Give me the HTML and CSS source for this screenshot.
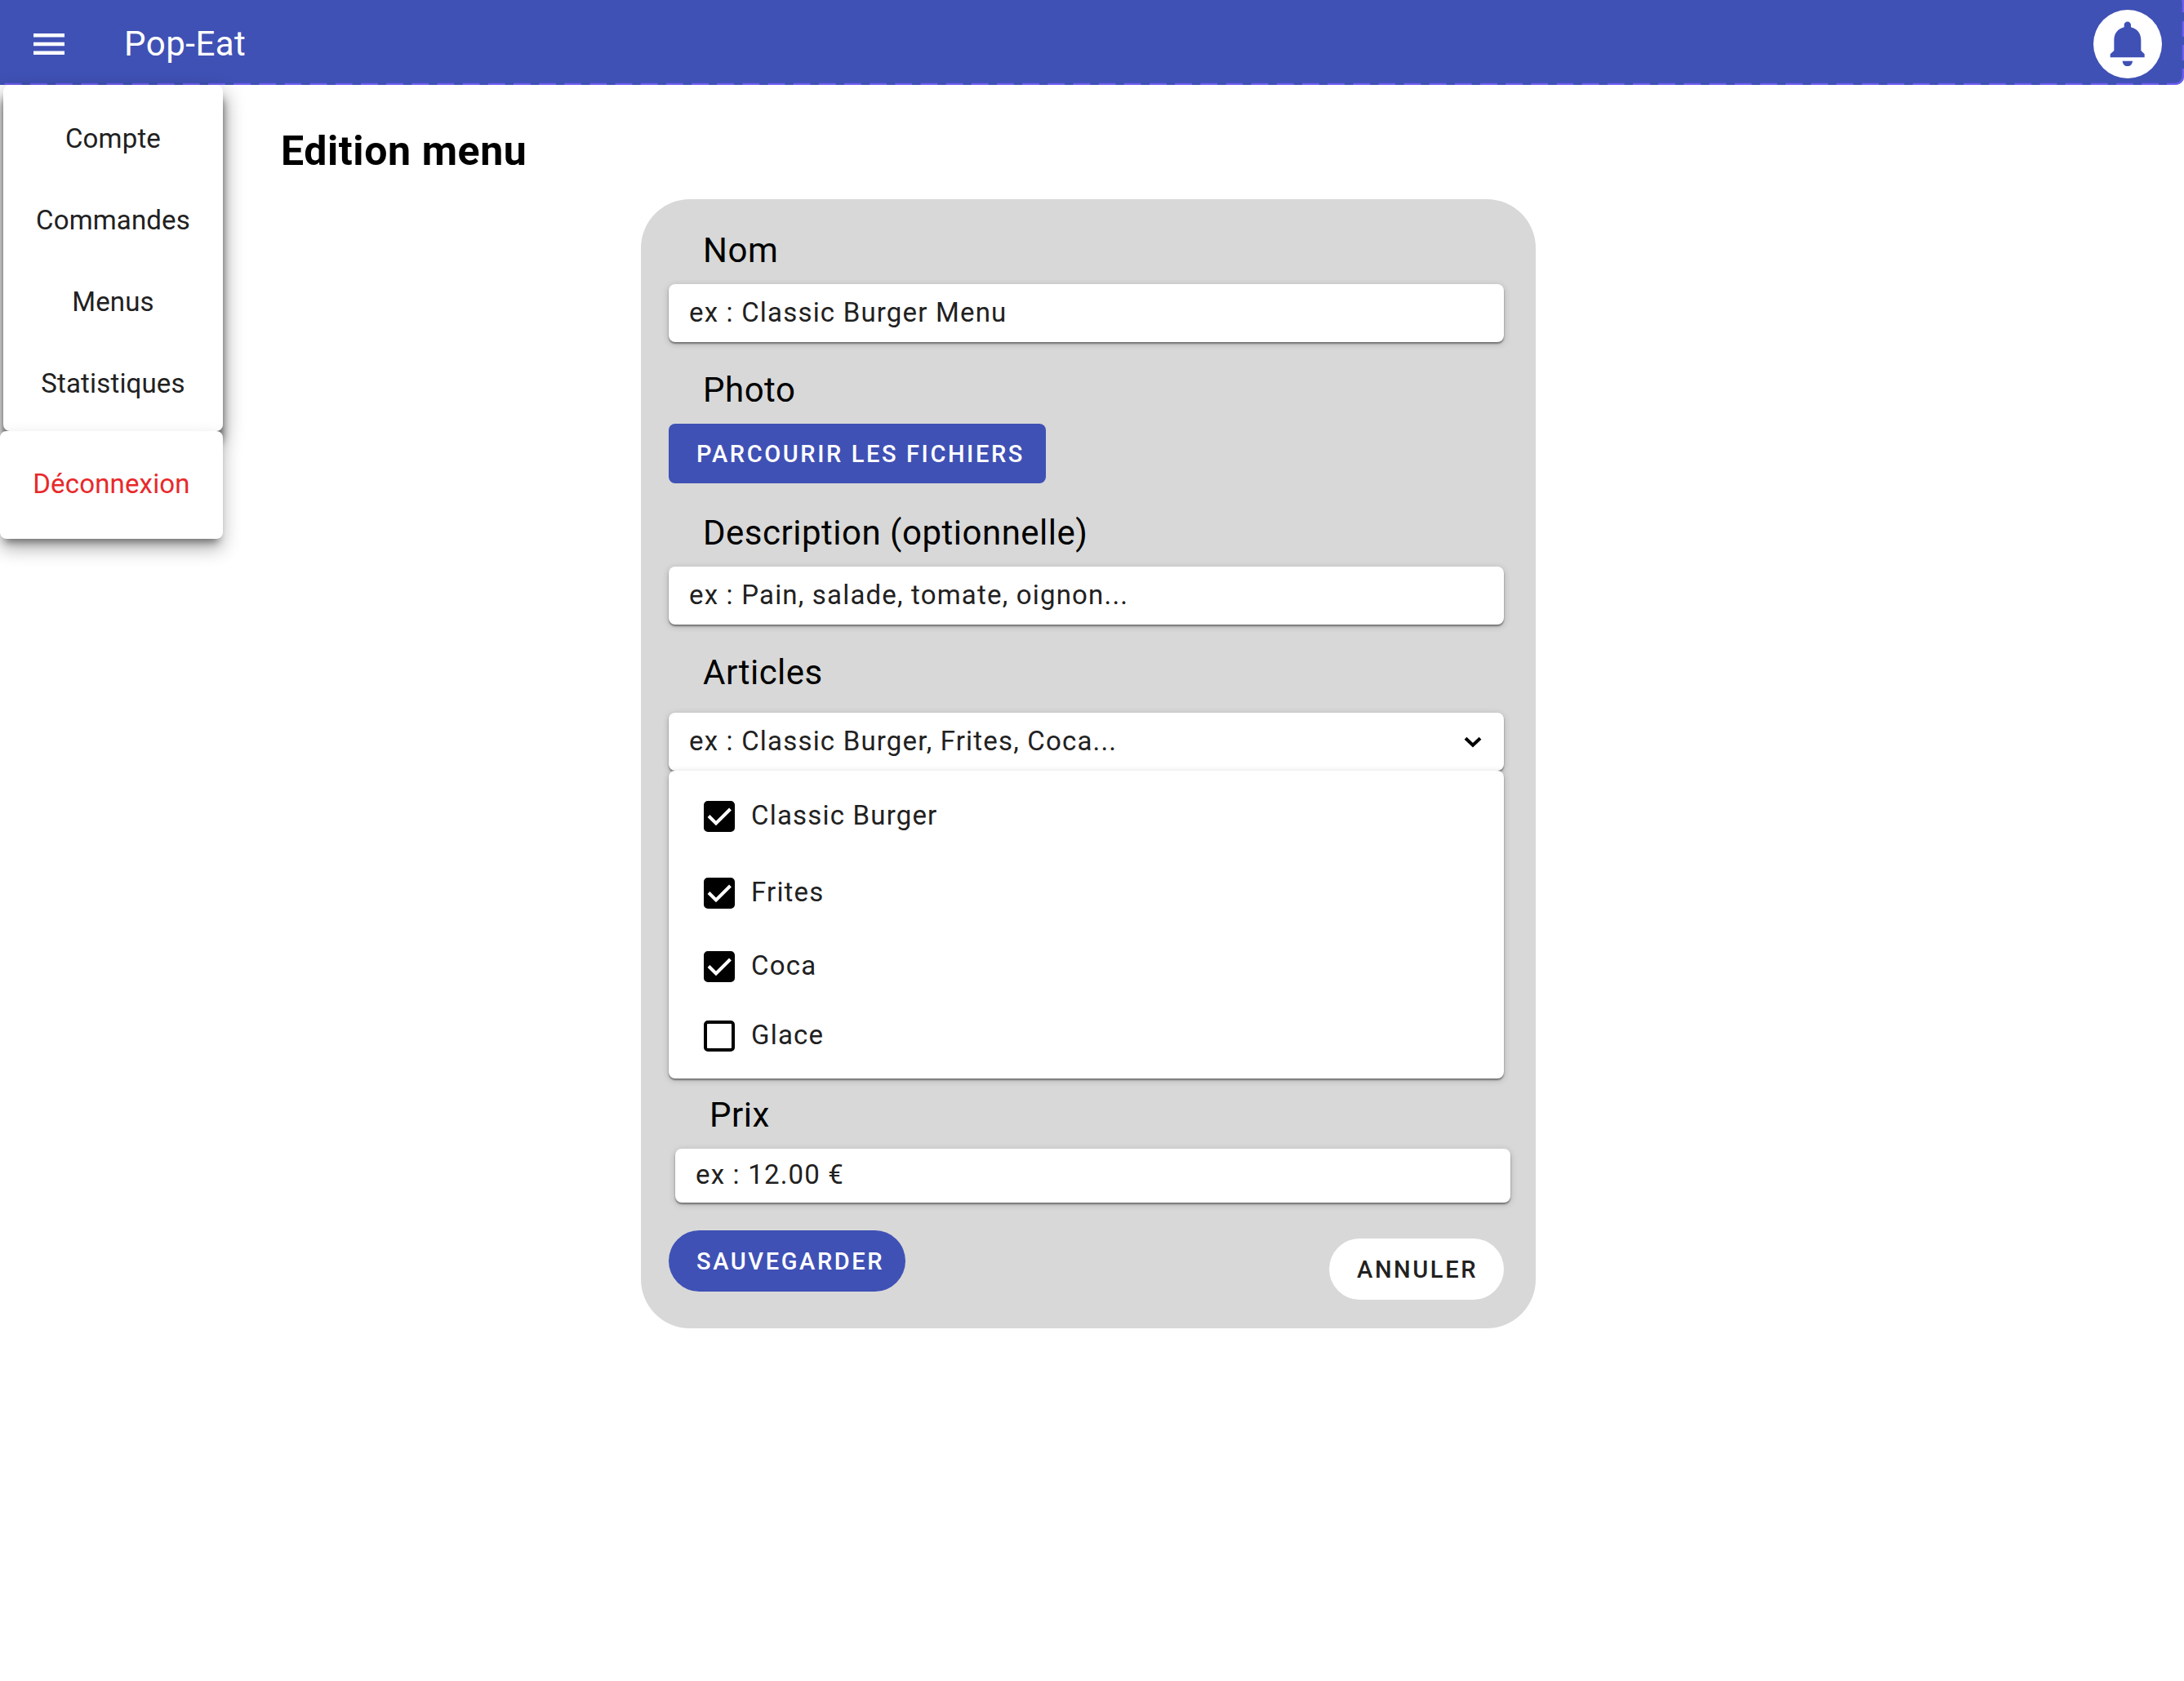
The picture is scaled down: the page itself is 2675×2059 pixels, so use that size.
FILE: index.html
```html
<!DOCTYPE html>
<html lang="fr">
<head>
<meta charset="utf-8">
<meta name="viewport" content="width=device-width, initial-scale=1">
<title>Pop-Eat – Edition menu</title>
<link rel="stylesheet" href="styles.css">
</head>
<body>
<header class="topbar">
  <button class="topbar-menu" type="button" aria-label="Menu" aria-expanded="true">
    <svg width="38" height="26" viewBox="0 0 38 26" aria-hidden="true"><path d="M0 2.2h38M0 13h38M0 23.8h38" stroke="#fff" stroke-width="4.4"/></svg>
  </button>
  <span class="topbar-brand">Pop-Eat</span>
  <button class="topbar-bell" type="button" aria-label="Notifications">
    <svg width="84" height="84" viewBox="268 37 252 252" aria-hidden="true">
      <path fill="#3f51b5" d="M381 93a12.500 12.500 0 0 1 25 0V101C430 107 443 125 443 148V187L456 200V212H330V200L344 187V148C344 125 357 107 381 101ZM375 225H412C411 237 404 244 393.500 244S376 237 375 225Z"/>
    </svg>
  </button>
  <svg class="topbar-outline" width="100" height="104" viewBox="0 0 100 104" aria-hidden="true">
    <g fill="none" stroke="#7b61ff" stroke-opacity=".8" stroke-width="2.400">
      <path d="M93 -4Q99 -3 99 4V15"/>
      <path d="M99 26V80" stroke-dasharray="19 10"/>
      <path d="M99 84V93A10 10 0 0 1 89 103H79"/>
      <path d="M69 103H-4000" stroke-dasharray="20.800 10.360"/>
    </g>
  </svg>
</header>

<div class="page">
  <nav class="drawer" aria-label="Navigation principale">
    <ul class="drawer-list">
      <li><a class="drawer-link" href="#compte">Compte</a></li>
      <li><a class="drawer-link" href="#commandes">Commandes</a></li>
      <li><a class="drawer-link" href="#menus">Menus</a></li>
      <li><a class="drawer-link" href="#statistiques">Statistiques</a></li>
    </ul>
    <a class="drawer-logout" href="#deconnexion">Déconnexion</a>
  </nav>

  <main class="content">
    <h1 class="title">Edition menu</h1>

    <form class="card">
      <div class="field">
        <label class="label" for="nom">Nom</label>
        <input class="input" id="nom" type="text" placeholder="ex : Classic Burger Menu">
      </div>

      <div class="field field-photo">
        <span class="label" id="photo-label">Photo</span>
        <button class="button button-file" type="button" aria-describedby="photo-label">PARCOURIR LES FICHIERS</button>
      </div>

      <div class="field">
        <label class="label" for="description">Description (optionnelle)</label>
        <input class="input" id="description" type="text" placeholder="ex : Pain, salade, tomate, oignon...">
      </div>

      <div class="field field-articles">
        <label class="label" for="articles">Articles</label>
        <div class="dropdown">
          <div class="select">
            <select class="input select-control" id="articles">
              <option>ex : Classic Burger, Frites, Coca...</option>
            </select>
            <svg class="select-arrow" width="22" height="14" viewBox="0 0 22 14" aria-hidden="true"><path d="M2 2.200l9 8.600 9-8.600" fill="none" stroke="#000" stroke-width="4"/></svg>
          </div>
          <div class="options" role="group" aria-label="Articles">
            <label class="option"><input class="checkbox" type="checkbox" checked>Classic Burger</label>
            <label class="option"><input class="checkbox" type="checkbox" checked>Frites</label>
            <label class="option"><input class="checkbox" type="checkbox" checked>Coca</label>
            <label class="option"><input class="checkbox" type="checkbox">Glace</label>
          </div>
        </div>
      </div>

      <div class="field field-price">
        <label class="label" for="prix">Prix</label>
        <input class="input" id="prix" type="text" placeholder="ex : 12.00 €">
      </div>

      <div class="actions">
        <button class="button button-pill" type="submit">SAUVEGARDER</button>
        <button class="button button-pill button-cancel" type="reset">ANNULER</button>
      </div>
    </form>
  </main>
</div>
</body>
</html>
```
FILE: styles.css
```css
:root {
  --primary: #3f51b5;
  --ink: #212121;
  --surface: #fff;
  --field-shadow: 0 2px 2px rgba(0, 0, 0, .4), 0 2px 8px rgba(0, 0, 0, .2);
}

*,
*::before,
*::after {
  box-sizing: border-box;
}

body {
  margin: 0;
  background: var(--surface);
  color: #000;
  font-family: Roboto, "Liberation Sans", sans-serif;
  letter-spacing: .01em;
}

button,
input,
select {
  font: inherit;
  margin: 0;
  border: 0;
}

/* Top bar */

.topbar {
  position: relative;
  display: flex;
  align-items: center;
  height: 104px;
  padding: 4px 27px 0 33px;
  overflow: hidden;
  background: var(--primary);
  border-bottom-right-radius: 10px;
}

.topbar-menu {
  display: flex;
  padding: 8px;
  background: none;
}

.topbar-brand {
  margin-left: 65px;
  color: #fff;
  font-size: 42px;
  line-height: 50px;
  letter-spacing: .012em;
}

.topbar-bell {
  display: flex;
  margin-left: auto;
  padding: 0;
  border-radius: 50%;
  background: var(--surface);
}

.topbar-outline {
  position: absolute;
  right: 0;
  bottom: 0;
  overflow: visible;
}

/* Navigation drawer, opened over the page */

.page {
  position: relative;
}

.drawer {
  position: absolute;
  top: 0;
  left: 0;
  width: 273px;
  font-size: 33px;
  line-height: 40px;
  text-align: center;
}

.drawer-list {
  margin: 0 0 0 4px;
  padding: 16px 0 8px;
  list-style: none;
  border-radius: 8px;
  background: var(--surface);
  box-shadow: 0 16px 10px rgba(0, 0, 0, .5), 0 12px 24px 2px rgba(0, 0, 0, .4);
}

.drawer-link,
.drawer-logout {
  display: block;
  color: var(--ink);
  text-decoration: none;
}

.drawer-link {
  padding: 30px 0;
}

.drawer-logout {
  position: relative;
  padding: 45px 0 47px;
  border-radius: 8px;
  background: var(--surface);
  color: #e8292b;
  box-shadow: 0 10px 10px -6px rgba(0, 0, 0, .4), 0 12px 22px rgba(0, 0, 0, .3);
}

/* Page content */

.content {
  padding: 51px 353px 48px 344px;
}

.title {
  margin: 0 0 29px;
  font-size: 50px;
  line-height: 60px;
  font-weight: 700;
  letter-spacing: .012em;
}

.card {
  max-width: 1096px;
  margin: 0 auto;
  padding: 38px 39px 35px 34px;
  border-radius: 60px;
  background: #d8d8d8;
}

.field {
  display: flex;
  flex-direction: column;
  align-items: flex-start;
  gap: 16px;
  margin-bottom: 34px;
}

.field-photo {
  margin-bottom: 36px;
}

.field-articles {
  gap: 24px;
  margin-bottom: 20px;
}

.field-price {
  margin: 0 -8px 34px 8px;
}

.label {
  padding-left: 42px;
  font-size: 42px;
  line-height: 50px;
  letter-spacing: .012em;
}

.input {
  width: 100%;
  height: 71px;
  padding: 0 25px 3px;
  border-radius: 8px;
  background: var(--surface);
  color: var(--ink);
  font-size: 33px;
  letter-spacing: .036em;
  box-shadow: var(--field-shadow);
}

.input::placeholder {
  color: var(--ink);
  opacity: 1;
}

.field-price .input {
  height: 66px;
}

/* Articles drop-down */

.dropdown {
  width: 100%;
}

.select {
  display: grid;
  align-items: center;
}

.select-control,
.select-arrow {
  grid-area: 1 / 1;
}

.select-control {
  appearance: none;
}

.select-arrow {
  justify-self: end;
  margin-right: 27px;
  pointer-events: none;
}

.options {
  position: relative;
  display: grid;
  grid-template-rows: 94px 90px 85px 38px;
  padding: 37px 43px 33px;
  border-radius: 8px;
  background: var(--surface);
  box-shadow: var(--field-shadow);
}

.option {
  display: flex;
  align-self: start;
  gap: 20px;
  color: var(--ink);
  font-size: 33px;
  line-height: 36px;
  letter-spacing: .036em;
}

.checkbox {
  appearance: none;
  width: 38px;
  height: 38px;
  border: 4px solid #000;
  border-radius: 5px;
  background: var(--surface);
}

.checkbox:checked {
  background: #000 url("data:image/svg+xml,%3Csvg xmlns='http://www.w3.org/2000/svg' viewBox='0 0 30 30'%3E%3Cpath d='M2 14.500l9 9L28.500 6' fill='none' stroke='%23fff' stroke-width='4'/%3E%3C/svg%3E") center / 30px 30px no-repeat;
}

/* Buttons */

.button {
  padding: 0 26px 0 34px;
  border-radius: 8px;
  background: var(--primary);
  color: #fff;
  font-size: 29px;
  font-weight: 500;
  line-height: 36px;
  letter-spacing: .09em;
}

.button-file {
  height: 73px;
}

.button-pill {
  height: 75px;
  border-radius: 38px;
}

.button-cancel {
  align-self: flex-end;
  padding-right: 32px;
  background: var(--surface);
  color: var(--ink);
}

.actions {
  display: flex;
  align-items: flex-start;
  justify-content: space-between;
  min-height: 85px;
}
```
